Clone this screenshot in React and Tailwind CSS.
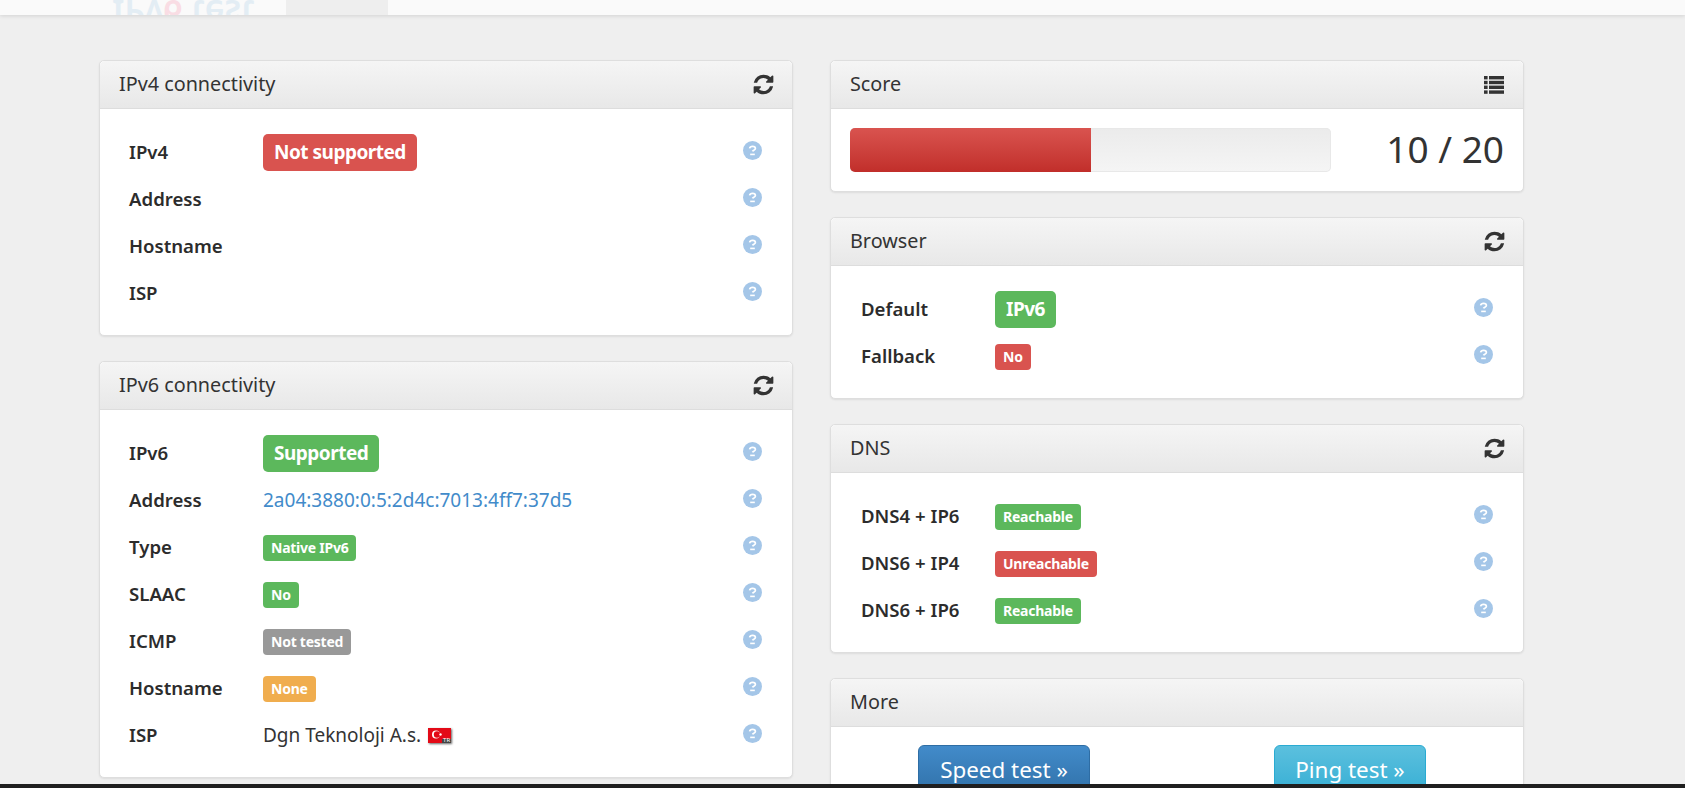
const green = "bg-[#5cb85c]";
const red = "bg-[#d9534f]";
const grey = "bg-[#999999]";
const orange = "bg-[#f0ad4e]";

function Big({ color, children }) {
  return (
    <span className={`${color} inline-block rounded-[5px] px-[11px] h-[37px] leading-[36px] text-[19px] font-bold text-white tracking-[-0.5px]`}>
      {children}
    </span>
  );
}

function Small({ color, children }) {
  return (
    <span className={`${color} inline-block rounded-[4px] px-[8px] h-[26px] leading-[26px] text-[14px] font-bold text-white tracking-[-0.25px]`}>
      {children}
    </span>
  );
}

// fa-question-circle look, the glyph inside is small and soft in the reference
function Help() {
  return (
    <svg viewBox="0 0 19 19" className="w-[19px] h-[19px] mb-[4px]">
      <circle cx="9.5" cy="9.5" r="9.5" fill="#a4c6e8" />
      <path d="M6.6 7.4c.3-1.3 1.5-2 2.9-2 1.6 0 2.9.8 2.9 2.1 0 1.6-2.4 1.7-2.9 2.9" fill="none" stroke="#fff" strokeWidth="1.7" />
      <rect x="7.2" y="12.6" width="4.6" height="1.6" fill="#fff" />
    </svg>
  );
}

function RefreshIcon() {
  return (
    <svg viewBox="0 0 1792 1792" className="w-[23px] h-[23px] mr-[-2px]" fill="#333">
      <path d="M1639 1056q0 5-1 7-64 268-268 434.5t-478 166.5q-146 0-282.5-55t-243.5-157l-129 129q-19 19-45 19t-45-19-19-45v-448q0-26 19-45t45-19h448q26 0 45 19t19 45-19 45l-137 137q71 66 161 102t187 36q134 0 250-65t186-179q11-17 53-117 8-23 30-23h192q13 0 22.5 9.5t9.5 22.5zm25-800v448q0 26-19 45t-45 19h-448q-26 0-45-19t-19-45 19-45l138-138q-148-137-349-137-134 0-250 65t-186 179q-11 17-53 117-8 23-30 23h-199q-13 0-22.5-9.5t-9.5-22.5v-7q65-268 270-434.5t480-166.5q146 0 284 55.5t245 156.5l130-129q19-19 45-19t45 19 19 45z" />
    </svg>
  );
}

function ListIcon() {
  return (
    <svg viewBox="0 0 20 18" className="w-[20px] h-[18px]" fill="#333">
      {[0, 4.8, 9.6, 14.4].map((y) => (
        <g key={y}>
          <rect x="0" y={y} width="3.6" height="3.4" />
          <rect x="5" y={y} width="15" height="3.4" />
        </g>
      ))}
    </svg>
  );
}

function Row({ label, children }) {
  return (
    <div className="flex items-center h-[47px]">
      <div className="w-[134px] shrink-0 pb-[2px] text-[18.6px] font-semibold text-[#2c2c2c]">{label}</div>
      <div className="flex-1 flex items-center text-[19px] text-[#333]">{children}</div>
      <Help />
    </div>
  );
}

function Panel({ title, icon, children }) {
  return (
    <div className="bg-white rounded-[5px] border border-[#dedede] shadow-[0_1px_2px_rgba(0,0,0,0.08)]">
      <div className="flex items-center justify-between h-[48px] px-[19px] rounded-t-[5px] border-b border-[#dddddd] bg-gradient-to-b from-[#f5f5f5] to-[#e8e8e8]">
        <span className="text-[19.8px] text-[#333] pb-[1px]">{title}</span>
        {icon}
      </div>
      {children}
    </div>
  );
}

function Flag() {
  return (
    <span className="relative inline-block ml-[7px] w-[23px] h-[15px] bg-[#e30a17] shadow-[1px_1px_2px_rgba(0,0,0,0.6)]">
      <svg viewBox="0 0 23 15" className="absolute inset-0 w-full h-full">
        <circle cx="8" cy="6.5" r="4" fill="#fff" />
        <circle cx="9" cy="6.5" r="3.2" fill="#e30a17" />
        <circle cx="12.5" cy="6.5" r="1.2" fill="#fff" />
        <rect x="14" y="11" width="9" height="4" fill="#444" />
      </svg>
      <span className="absolute right-[1px] bottom-[-1px] text-[6px] leading-[7px] text-white">TR</span>
    </span>
  );
}

export default function App() {
  return (
    <div className="relative h-[788px] overflow-hidden bg-[#efefef] font-['Noto_Sans','Open_Sans',sans-serif]">
      {/* top nav, scrolled almost out of view, logo reflection still shows */}
      <div className="flex h-[15px] bg-white shadow-[0_1px_4px_rgba(0,0,0,0.12)]">
        <div className="w-[286px] bg-[#fafafa] overflow-hidden pl-[112px]">
          <div className="mt-[-5px] h-[36px] text-[33.5px] leading-[36px] font-semibold text-[#e3edf4] whitespace-nowrap -scale-y-100 origin-center">
            IPv<span className="text-[#f9dde4]">6</span> test
          </div>
        </div>
        <div className="w-[102px] bg-[#eeeeee]" />
        <div className="flex-1 bg-[#fafafa]" />
      </div>

      <div className="flex gap-[37px] pl-[99px] pt-[45px]">
        {/* left column */}
        <div className="w-[694px] flex flex-col gap-[25px] shrink-0">
          <Panel title="IPv4 connectivity" icon={<RefreshIcon />}>
            <div className="pt-[20px] pb-[18px] pl-[29px] pr-[30px]">
              <Row label="IPv4"><Big color={red}>Not supported</Big></Row>
              <Row label="Address" />
              <Row label="Hostname" />
              <Row label="ISP" />
            </div>
          </Panel>

          <Panel title="IPv6 connectivity" icon={<RefreshIcon />}>
            <div className="pt-[20px] pb-[18px] pl-[29px] pr-[30px]">
              <Row label="IPv6"><Big color={green}>Supported</Big></Row>
              <Row label="Address"><span className="text-[#428bca]">2a04:3880:0:5:2d4c:7013:4ff7:37d5</span></Row>
              <Row label="Type"><Small color={green}>Native IPv6</Small></Row>
              <Row label="SLAAC"><Small color={green}>No</Small></Row>
              <Row label="ICMP"><Small color={grey}>Not tested</Small></Row>
              <Row label="Hostname"><Small color={orange}>None</Small></Row>
              <Row label="ISP">Dgn Teknoloji A.s. <Flag /></Row>
            </div>
          </Panel>
        </div>

        {/* right column */}
        <div className="w-[694px] flex flex-col gap-[25px] shrink-0">
          <Panel title="Score" icon={<ListIcon />}>
            <div className="flex items-center justify-between h-[82px] pl-[19px] pr-[19px]">
              <div className="w-[481px] h-[44px] rounded-[5px] shadow-[inset_0_0_0_1px_#e8e8e8] bg-gradient-to-b from-[#ebebeb] to-[#f5f5f5] overflow-hidden">
                <div className="w-1/2 h-full bg-gradient-to-b from-[#d9534f] to-[#c12e2a]" />
              </div>
              <span className="text-[37px] text-[#333] pb-[2px]">10 / 20</span>
            </div>
          </Panel>

          <Panel title="Browser" icon={<RefreshIcon />}>
            <div className="pt-[20px] pb-[18px] pl-[30px] pr-[30px]">
              <Row label="Default"><Big color={green}>IPv6</Big></Row>
              <Row label="Fallback"><Small color={red}>No</Small></Row>
            </div>
          </Panel>

          <Panel title="DNS" icon={<RefreshIcon />}>
            <div className="pt-[20px] pb-[18px] pl-[30px] pr-[30px]">
              <Row label="DNS4 + IP6"><Small color={green}>Reachable</Small></Row>
              <Row label="DNS6 + IP4"><Small color={red}>Unreachable</Small></Row>
              <Row label="DNS6 + IP6"><Small color={green}>Reachable</Small></Row>
            </div>
          </Panel>

          <Panel title="More">
            <div className="flex pt-[18px]">
              <div className="w-1/2 flex justify-center">
                <button className="h-[60px] px-[21px] pb-[10px] rounded-[6px] border border-[#2e6da4] text-[22.4px] text-white bg-gradient-to-b from-[#428bca] to-[#2d6ca2]">Speed test »</button>
              </div>
              <div className="w-1/2 flex justify-center">
                <button className="h-[60px] px-[20px] pb-[10px] rounded-[6px] border border-[#2aabd2] text-[22.4px] text-white bg-gradient-to-b from-[#5bc0de] to-[#2aabd2]">Ping test »</button>
              </div>
            </div>
          </Panel>
        </div>
      </div>

      {/* dark strip at the bottom edge */}
      <div className="absolute left-0 right-0 bottom-0 h-[4px] bg-[#1f1f1f]" />
    </div>
  );
}
